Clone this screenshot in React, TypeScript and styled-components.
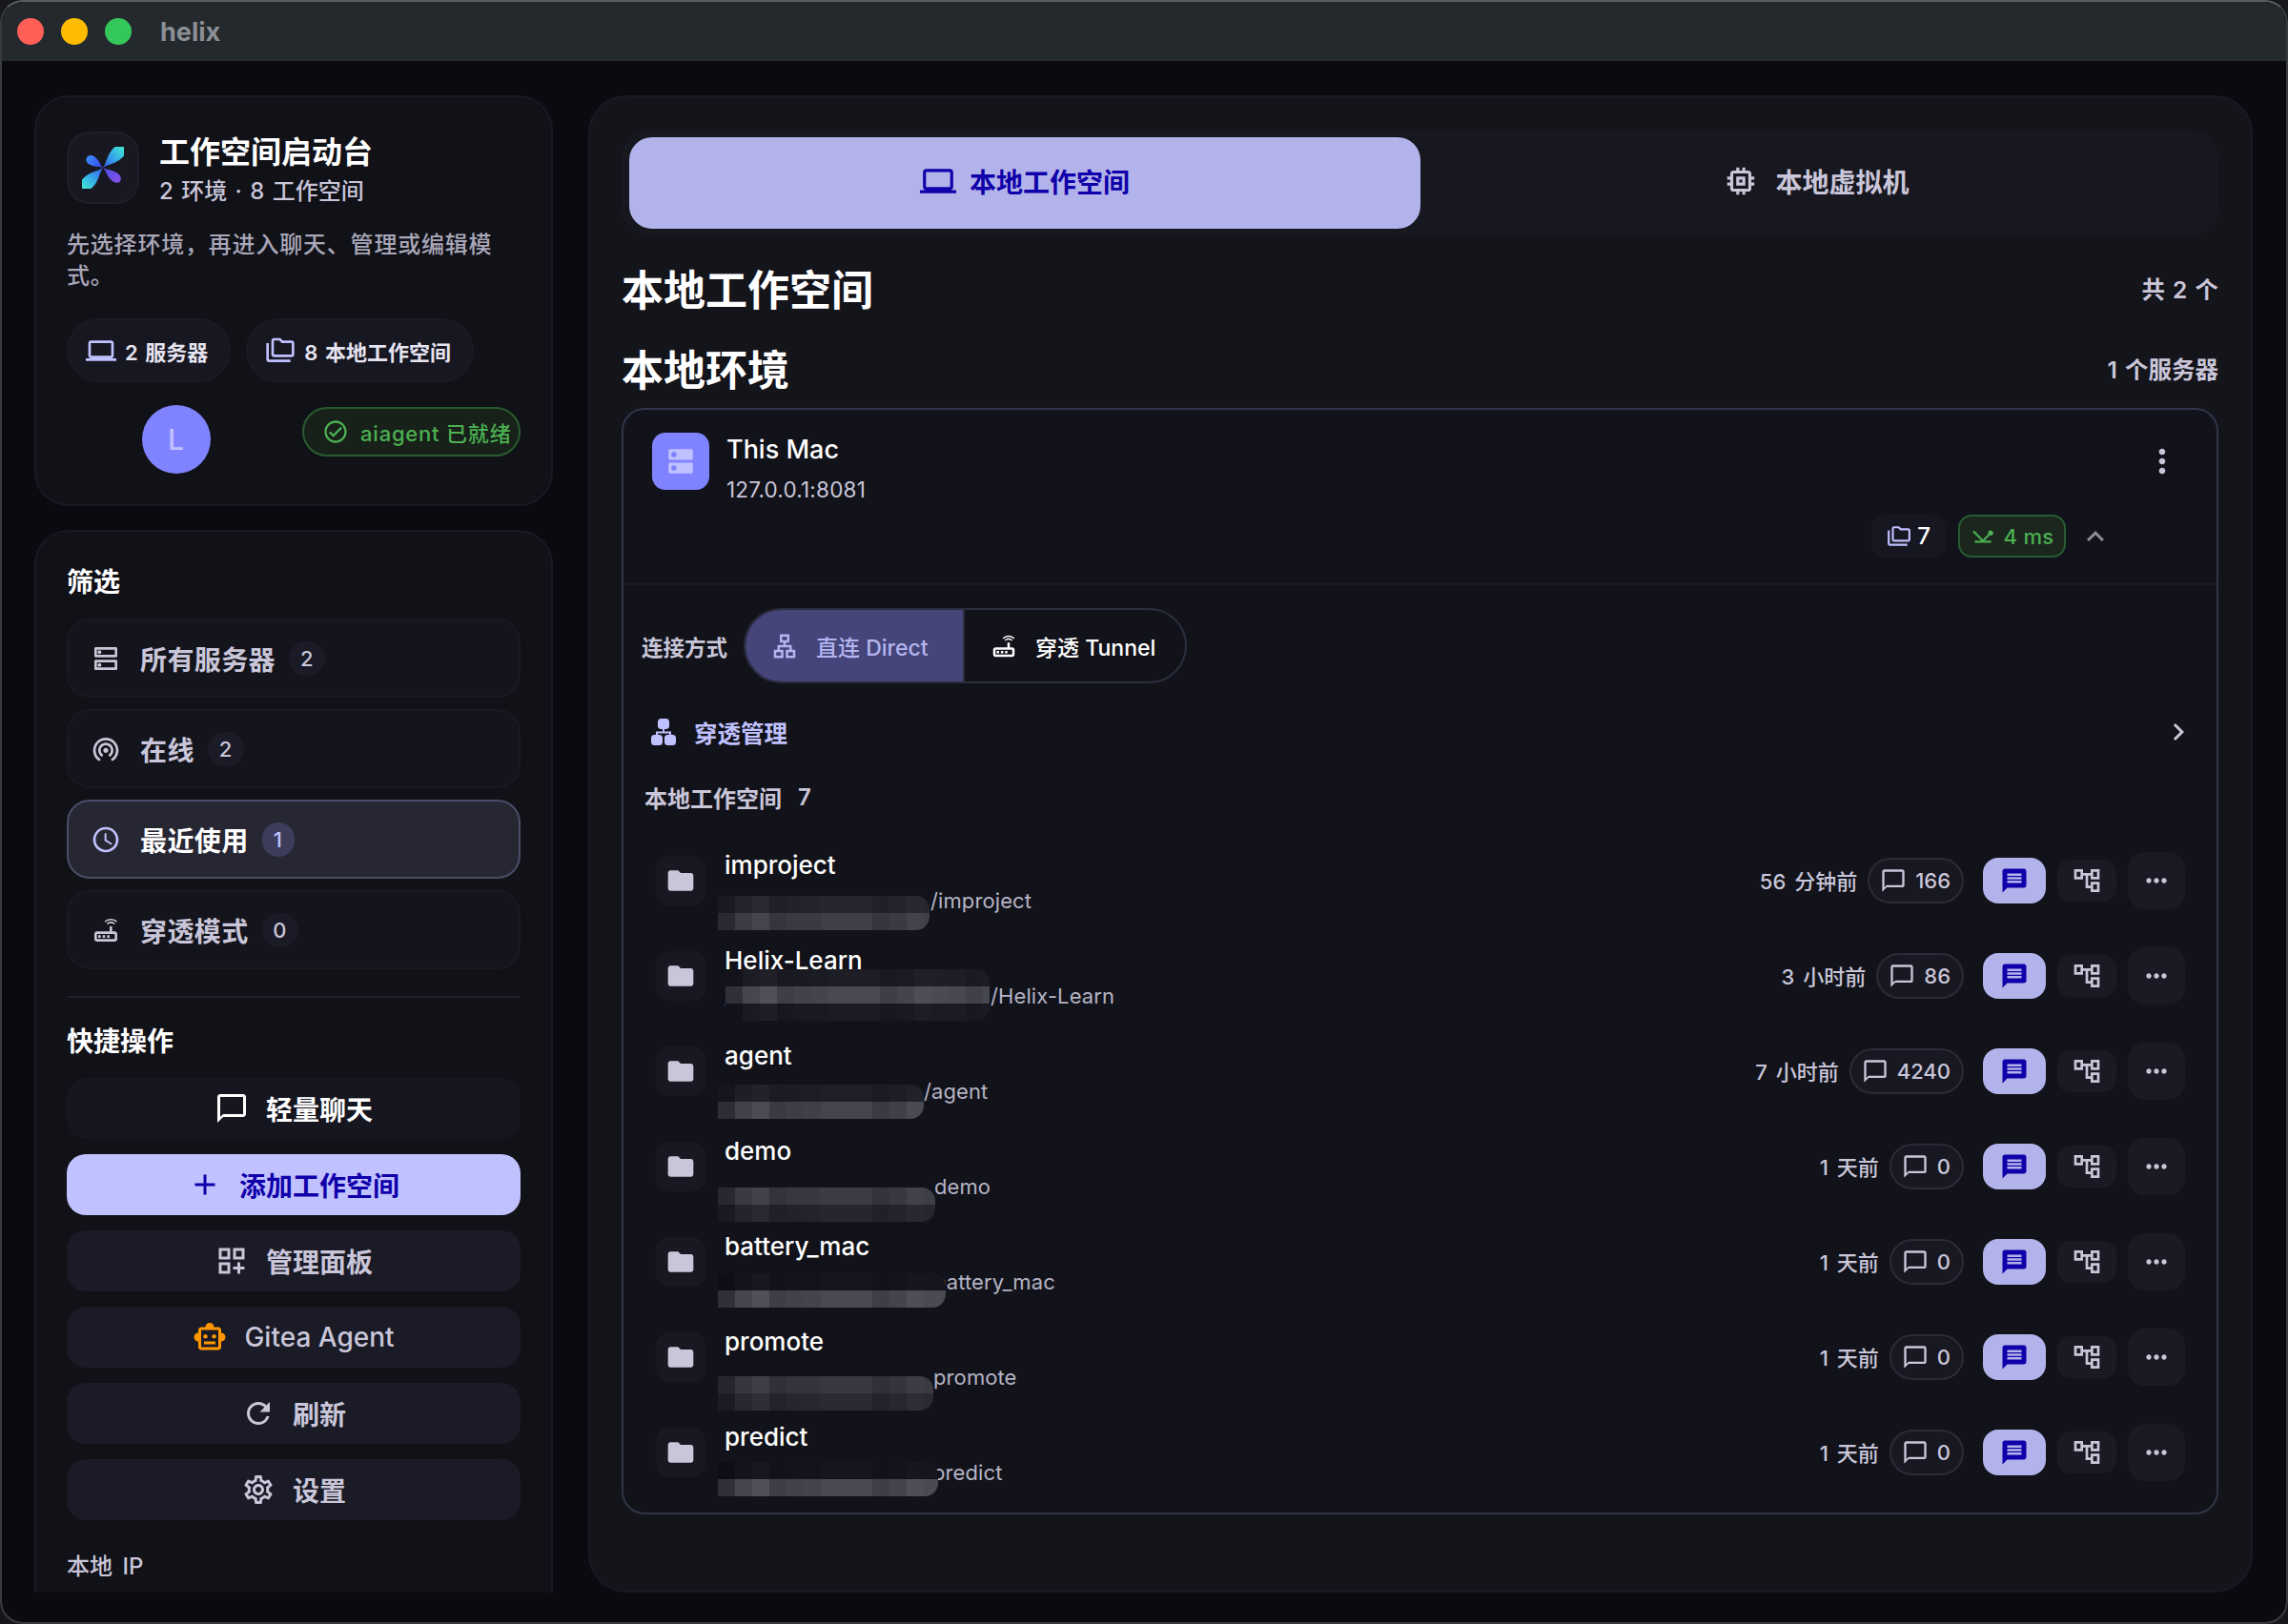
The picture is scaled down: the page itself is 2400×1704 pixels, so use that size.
import React from 'react'
import styled, { createGlobalStyle } from 'styled-components'
import {
  MdAdd,
  MdChatBubbleOutline,
  MdChevronRight,
  MdDns,
  MdKeyboardArrowUp,
  MdLaptop,
  MdMessage,
  MdMoreHoriz,
  MdMoreVert,
  MdFolder,
  MdNetworkPing,
  MdOutlineAccountTree,
  MdOutlineCheckCircle,
  MdOutlineDashboardCustomize,
  MdOutlineDns,
  MdOutlineFolderCopy,
  MdOutlineLan,
  MdOutlineMemory,
  MdOutlineRouter,
  MdOutlineSchedule,
  MdOutlineSettings,
  MdOutlineSmartToy,
  MdOutlineWifiTethering,
  MdRefresh,
} from 'react-icons/md'

const C = {
  primary: '#c0c1ff',
  primaryDim: '#b2b3ea',
  onPrimary: '#1000a9',
  text: '#c9c6d9',
  green: '#4caf50',
}

const GlobalStyle = createGlobalStyle`
  html, body { margin: 0; padding: 0; background: #16171a; }
  body {
    font-family: Inter, "Noto Sans CJK SC", sans-serif;
    color: #fff;
    -webkit-font-smoothing: antialiased;
  }
  * { box-sizing: border-box; }
`

const Glyph = styled.span<{ $size: number; $color?: string }>`
  display: inline-flex;
  flex: none;
  align-items: center;
  justify-content: center;
  width: ${(p) => p.$size}px;
  height: ${(p) => p.$size}px;
  font-size: ${(p) => p.$size}px;
  color: ${(p) => p.$color || 'inherit'};
`

const Window = styled.div`
  width: 2400px;
  height: 1704px;
  display: flex;
  flex-direction: column;
  overflow: hidden;
  border-radius: 24px;
  border: 2px solid #3a3a3f;
  border-top-color: #5c5d60;
  background: #0a0a10;
`

const TitleBar = styled.div`
  height: 62px;
  flex: none;
  display: flex;
  align-items: center;
  padding-left: 16px;
  background: #24292d;
`

const Light = styled.span<{ $color: string }>`
  width: 28px;
  height: 28px;
  border-radius: 50%;
  margin-right: 18px;
  background: ${(p) => p.$color};
`

const AppName = styled.span`
  margin-left: 12px;
  font-size: 27px;
  font-weight: 700;
  color: #8c9096;
`

const Content = styled.div`
  flex: 1;
  min-height: 0;
  display: flex;
  gap: 37px;
  padding: 36px 35px 31px 34px;
`

const Sidebar = styled.div`
  width: 544px;
  flex: none;
  display: flex;
  flex-direction: column;
  gap: 25px;
`

const HeroCard = styled.div`
  flex: none;
  padding: 36px 32px 32px;
  background: #111118;
  border: 2px solid #191923;
  border-radius: 36px;
`

const HeroTop = styled.div`
  display: flex;
  gap: 21px;
`

const LogoBox = styled.div`
  width: 76px;
  height: 76px;
  flex: none;
  display: flex;
  align-items: center;
  justify-content: center;
  background: #181822;
  border: 2px solid #1e1e2a;
  border-radius: 24px;
`

const HeroTitle = styled.div`
  font-size: 32px;
  line-height: 44px;
  font-weight: 700;
  color: #fff;
`

const HeroSub = styled.div`
  margin-top: 3px;
  font-size: 24px;
  line-height: 32px;
  font-weight: 500;
  word-spacing: 2px;
  color: ${C.text};
`

const HeroDesc = styled.p`
  margin: 24px 0 0;
  font-size: 24px;
  line-height: 32.5px;
  font-weight: 500;
  letter-spacing: 0.8px;
  color: #a9a7b8;
`

const ChipRow = styled.div`
  display: flex;
  gap: 16px;
  margin-top: 28px;
`

const StatChip = styled.div`
  height: 67px;
  display: flex;
  align-items: center;
  gap: 9px;
  padding: 0 22px 0 18px;
  border-radius: 34px;
  background: #171722;
  border: 2px solid #1a1a25;
  font-size: 22px;
  font-weight: 600;
  word-spacing: 2px;
  color: #e6e4f0;
`

const HeroFooter = styled.div`
  display: flex;
  align-items: flex-start;
  gap: 18px;
  margin-top: 24px;
`

const AvatarSlot = styled.div`
  flex: 1;
  display: flex;
  justify-content: center;
`

const Avatar = styled.div`
  width: 72px;
  height: 72px;
  display: flex;
  align-items: center;
  justify-content: center;
  border-radius: 50%;
  background: #8083ff;
  color: ${C.primary};
  font-size: 30px;
  font-weight: 500;
`

const ReadyBadge = styled.div`
  height: 52px;
  width: 229px;
  margin-top: 2px;
  display: flex;
  align-items: center;
  gap: 12px;
  padding-left: 19px;
  white-space: nowrap;
  border-radius: 26px;
  background: #17211a;
  border: 2px solid #2a5b30;
  color: ${C.green};
  font-size: 22px;
  font-weight: 500;
  letter-spacing: 0.8px;
`

const FilterCard = styled.div`
  flex: 1;
  min-height: 0;
  overflow: hidden;
  padding: 35px 32px 0;
  background: #111118;
  border: 2px solid #191923;
  border-bottom: 0;
  border-radius: 36px 36px 0 0;
`

const SideHeading = styled.div`
  font-size: 28px;
  line-height: 36px;
  font-weight: 700;
  color: #fff;
`

const FilterList = styled.div`
  display: flex;
  flex-direction: column;
  gap: 12px;
  margin-top: 20px;
`

const FilterRow = styled.div<{ $active?: boolean }>`
  height: 83px;
  display: flex;
  align-items: center;
  gap: 20px;
  padding-left: 23px;
  border-radius: 24px;
  border: 2px solid ${(p) => (p.$active ? '#4d4c68' : '#191922')};
  background: ${(p) => (p.$active ? '#272733' : '#14141c')};
  color: ${(p) => (p.$active ? '#fff' : C.text)};
  font-size: 28px;
  letter-spacing: 0.4px;
  font-weight: ${(p) => (p.$active ? 700 : 600)};
`

const FilterCount = styled.span<{ $active?: boolean }>`
  min-width: ${(p) => (p.$active ? 34 : 38)}px;
  height: 36px;
  margin-left: -6px;
  display: inline-flex;
  align-items: center;
  justify-content: center;
  border-radius: 18px;
  background: ${(p) => (p.$active ? '#3d3d5b' : '#1b1b27')};
  color: ${(p) => (p.$active ? C.primary : C.text)};
  font-size: 22px;
  font-weight: 500;
`

const Divider = styled.div`
  height: 2px;
  margin-top: 28px;
  background: #1f1f2c;
`

const QuickHeading = styled(SideHeading)`
  margin-top: 28px;
`

const QuickList = styled.div`
  display: flex;
  flex-direction: column;
  gap: 16px;
  margin-top: 20px;
`

const QuickButton = styled.div<{ $variant?: 'primary' | 'soft' | 'plain' }>`
  height: 64px;
  display: flex;
  align-items: center;
  justify-content: center;
  gap: 18px;
  border-radius: 20px;
  font-size: 28px;
  font-weight: ${(p) => (p.$variant === 'plain' ? 500 : 600)};
  background: ${(p) => (p.$variant === 'primary' ? C.primary : p.$variant === 'soft' ? '#161620' : '#1a1b26')};
  color: ${(p) => (p.$variant === 'primary' ? C.onPrimary : p.$variant === 'soft' ? '#fff' : C.text)};
`

const LocalIp = styled.div`
  margin-top: 33px;
  font-size: 24px;
  line-height: 32px;
  font-weight: 500;
  word-spacing: 4px;
  color: ${C.text};
`

const MainPanel = styled.div`
  flex: 1;
  min-width: 0;
  padding: 34px 34px 0 33px;
  background: #14141b;
  border: 2px solid #191923;
  border-radius: 40px;
`

const TabBar = styled.div`
  height: 111px;
  display: flex;
  padding: 8px 7px 7px 8px;
  border-radius: 28px;
  background: #171720;
`

const Tab = styled.div<{ $active?: boolean }>`
  flex: 1;
  display: flex;
  align-items: center;
  justify-content: center;
  gap: ${(p) => (p.$active ? 14 : 17)}px;
  padding-bottom: 4px;
  border-radius: 24px;
  font-size: 28px;
  font-weight: 600;
  background: ${(p) => (p.$active ? C.primaryDim : 'transparent')};
  color: ${(p) => (p.$active ? C.onPrimary : C.text)};
`

const HeadingRow = styled.div<{ $gap: number }>`
  height: 56px;
  margin-top: ${(p) => p.$gap}px;
  display: flex;
  align-items: center;
  justify-content: space-between;
`

const PageHeading = styled.h2`
  margin: 0;
  font-size: 44px;
  font-weight: 700;
  color: #fff;
`

const HeadingMeta = styled.span`
  font-size: 24.5px;
  font-weight: 600;
  word-spacing: 2px;
  color: ${C.text};
`

const ServerCard = styled.div`
  margin-top: 14px;
  border: 2px solid #34344a;
  border-radius: 24px;
  background: #12131a;
`

const ServerHead = styled.div`
  height: 184px;
  padding: 24px 37px 0 30px;
  border-bottom: 2px solid #1c1c28;
`

const ServerTop = styled.div`
  display: flex;
  align-items: flex-start;
  gap: 18px;
`

const ServerIcon = styled.div`
  width: 60px;
  height: 60px;
  flex: none;
  display: flex;
  align-items: center;
  justify-content: center;
  border-radius: 14px;
  background: #8083ff;
  color: ${C.primary};
`

const ServerInfo = styled.div`
  flex: 1;
`

const ServerName = styled.div`
  font-size: 27px;
  line-height: 36px;
  font-weight: 500;
  color: #fff;
`

const ServerAddr = styled.div`
  margin-top: 10px;
  font-size: 22.5px;
  line-height: 28px;
  letter-spacing: 0.2px;
  color: ${C.text};
`

const KebabSlot = styled.div`
  margin-top: 10px;
  display: flex;
  color: ${C.text};
`

const ServerStats = styled.div`
  display: flex;
  justify-content: flex-end;
  align-items: center;
  gap: 13px;
  margin-top: 12px;
  padding-right: 72px;
`

const CountChip = styled.div`
  width: 78px;
  height: 45px;
  display: flex;
  align-items: center;
  justify-content: center;
  gap: 6px;
  border-radius: 14px;
  background: #171722;
  font-size: 24px;
  font-weight: 500;
  color: #fff;
`

const LatencyChip = styled.div`
  width: 113px;
  height: 45px;
  display: flex;
  align-items: center;
  justify-content: center;
  gap: 9px;
  border-radius: 14px;
  background: #1b261f;
  border: 2px solid #2a5b30;
  color: ${C.green};
  font-size: 22px;
  font-weight: 500;
  letter-spacing: 0.3px;
  white-space: nowrap;
`

const ConnectRow = styled.div`
  display: flex;
  align-items: center;
  gap: 17px;
  margin-top: 24px;
  padding-left: 19px;
`

const ConnectLabel = styled.span`
  font-size: 22.5px;
  font-weight: 600;
  color: ${C.text};
`

const Segmented = styled.div`
  height: 79px;
  display: flex;
  overflow: hidden;
  border-radius: 40px;
  border: 2px solid #2d2d40;
`

const Segment = styled.div<{ $active?: boolean }>`
  width: ${(p) => (p.$active ? 230 : 231)}px;
  display: flex;
  align-items: center;
  gap: 18px;
  padding-left: 26px;
  white-space: nowrap;
  font-size: 23px;
  font-weight: 500;
  background: ${(p) => (p.$active ? '#45457a' : 'transparent')};
  color: ${(p) => (p.$active ? '#b4b5f0' : '#fff')};
  border-right: ${(p) => (p.$active ? '2px solid #2d2d40' : '0')};
`

const TunnelRow = styled.div`
  height: 54px;
  margin-top: 24px;
  padding: 0 22px 0 29px;
  display: flex;
  align-items: center;
  gap: 19px;
  color: ${C.primary};
  font-size: 24.5px;
  font-weight: 700;
`

const TunnelLabel = styled.span`
  flex: 1;
`

const ListLabel = styled.div`
  display: flex;
  gap: 17px;
  height: 32px;
  align-items: center;
  margin-top: 25px;
  padding-left: 22px;
  font-size: 24px;
  font-weight: 600;
  color: ${C.text};
`

const WorkspaceList = styled.div`
  margin-top: 22px;
  padding-bottom: 13px;
`

const WorkspaceRow = styled.div`
  height: 100px;
  display: flex;
  align-items: center;
  padding: 0 33px 0 34px;
`

const FolderBox = styled.div`
  width: 52px;
  height: 52px;
  flex: none;
  display: flex;
  align-items: center;
  justify-content: center;
  border-radius: 14px;
  background: #181822;
  color: ${C.text};
`

const RowInfo = styled.div`
  flex: 1;
  min-width: 0;
  margin-left: 20px;
`

const RowName = styled.div`
  font-size: 26px;
  line-height: 36px;
  font-weight: 500;
  color: #fff;
`

const RowPath = styled.div`
  margin-top: 5px;
  display: flex;
  height: 28px;
  align-items: center;
  font-size: 22px;
  letter-spacing: 0.1px;
  color: #b5b3c5;
  white-space: nowrap;
`

const PathPrefix = styled.div<{ $width: number }>`
  position: relative;
  flex: none;
  width: ${(p) => p.$width}px;
`

const MosaicBlock = styled.div<{ $top: number; $left: number }>`
  position: absolute;
  left: ${(p) => p.$left}px;
  top: ${(p) => p.$top}px;
  overflow: hidden;
  z-index: 1;
  border-radius: 0 14px 14px 0;
`

const MosaicLine = styled.div`
  display: flex;
  height: 18px;
`

const MosaicCell = styled.span`
  width: 18px;
  flex: none;
  height: 18px;
`

const PathTail = styled.span`
  position: relative;
`

const RowTime = styled.span`
  margin-right: 11px;
  padding-bottom: 3px;
  font-size: 22px;
  font-weight: 500;
  word-spacing: 3px;
  color: ${C.text};
`

const MessagePill = styled.div`
  height: 48px;
  display: flex;
  align-items: center;
  gap: 9px;
  padding: 0 12px 0 11px;
  border-radius: 24px;
  border: 2px solid #2b2b39;
  background: #181822;
  font-size: 22px;
  font-weight: 500;
  color: ${C.text};
`

const ChatButton = styled.div`
  width: 66px;
  height: 48px;
  margin-left: 20px;
  display: flex;
  align-items: center;
  justify-content: center;
  border-radius: 16px;
  background: ${C.primaryDim};
  color: ${C.onPrimary};
`

const TreeButton = styled.div`
  width: 62px;
  height: 44px;
  margin-left: 12px;
  display: flex;
  align-items: center;
  justify-content: center;
  border-radius: 14px;
  background: #1a1a24;
  color: ${C.text};
`

const MoreButton = styled.div`
  width: 60px;
  height: 60px;
  margin-left: 12px;
  display: flex;
  align-items: center;
  justify-content: center;
  border-radius: 18px;
  background: #1a1a24;
  color: ${C.text};
`

function HelixLogo() {
  const petal = 'M0 0C-1 -6 -8 -11 -8 -20A8 8 0 0 1 8 -20C8 -11 1 -6 0 0Z'
  return (
    <svg width="44" height="44" viewBox="0 0 44 44">
      <defs>
        <linearGradient id="tealPetal" gradientUnits="userSpaceOnUse" x1="0" y1="0" x2="0" y2="-26">
          <stop offset="0" stopColor="#3a5cf0" />
          <stop offset="0.55" stopColor="#35a8e8" />
          <stop offset="1" stopColor="#3fe0d8" />
        </linearGradient>
        <linearGradient id="bluePetal" gradientUnits="userSpaceOnUse" x1="0" y1="0" x2="0" y2="-26">
          <stop offset="0" stopColor="#3a3ff0" />
          <stop offset="1" stopColor="#3a8af5" />
        </linearGradient>
        <linearGradient id="purplePetal" gradientUnits="userSpaceOnUse" x1="0" y1="0" x2="0" y2="-26">
          <stop offset="0" stopColor="#4a50e8" />
          <stop offset="1" stopColor="#8150e6" />
        </linearGradient>
      </defs>
      <path d={petal} fill="url(#bluePetal)" transform="translate(22 22) rotate(-57) scale(0.62 0.72)" />
      <path d={petal} fill="url(#purplePetal)" transform="translate(22 22) rotate(128) scale(0.62 0.82)" />
      <path d={petal} fill="url(#tealPetal)" transform="translate(22 22) rotate(45) scale(0.85 1.1)" />
      <path d={petal} fill="url(#tealPetal)" transform="translate(22 22) rotate(225) scale(0.85 1.1)" />
    </svg>
  )
}

function TunnelHubIcon() {
  return (
    <svg width="26" height="28" viewBox="0 0 26 28" fill="currentColor">
      <rect x="7" y="0" width="12" height="11" rx="3.5" />
      <rect x="0" y="17" width="12" height="11" rx="3.5" />
      <rect x="14" y="17" width="12" height="11" rx="3.5" />
      <path d="M12 10h2v3.5h7v4h-2v-2H7v2H5v-4h7z" />
    </svg>
  )
}

const filters = [
  { label: '所有服务器', count: 2, icon: <MdOutlineDns /> },
  { label: '在线', count: 2, icon: <MdOutlineWifiTethering /> },
  { label: '最近使用', count: 1, icon: <MdOutlineSchedule />, active: true },
  { label: '穿透模式', count: 0, icon: <MdOutlineRouter /> },
]

// brightness of each mosaic square, same across rows like the original blur
const mosaicPattern = [-22, 0, 10, -8, -4, -2, 3, 3, 3, -8, -2, 8, 4, 2, -6, 0]

type Workspace = {
  name: string
  head?: string
  tail: string
  prefix: number
  top: number
  left?: number
  width: number
  lines: number[]
  time: string
  messages: number
}

const workspaces: Workspace[] = [
  { name: 'improject', tail: '/improject', prefix: 216, top: -5, width: 222, lines: [36, 60], time: '56 分钟前', messages: 166 },
  { name: 'Helix-Learn', head: '/', tail: '/Helix-Learn', prefix: 279, top: -15, left: 1, width: 277, lines: [28, 70, 26], time: '3 小时前', messages: 86 },
  { name: 'agent', tail: '/agent', prefix: 209, top: -7, width: 216, lines: [30, 66], time: '7 小时前', messages: 4240 },
  { name: 'demo', tail: 'demo', prefix: 220, top: 1, width: 228, lines: [58, 36], time: '1 天前', messages: 0 },
  { name: 'battery_mac', tail: 'battery_mac', prefix: 219, top: -9, width: 239, lines: [20, 70], time: '1 天前', messages: 0 },
  { name: 'promote', tail: 'promote', prefix: 219, top: -1, width: 226, lines: [54, 40], time: '1 天前', messages: 0 },
  { name: 'predict', tail: 'predict', prefix: 218, top: -11, width: 231, lines: [20, 70], time: '1 天前', messages: 0 },
]

function Mosaic({ top, left = -7, width, lines }: { top: number; left?: number; width: number; lines: number[] }) {
  const cols = Math.ceil(width / 18)
  return (
    <MosaicBlock $top={top} $left={left} style={{ width }}>
      {lines.map((base, l) => (
        <MosaicLine key={l}>
          {Array.from({ length: cols }).map((_, c) => {
            const v = base + Math.round((mosaicPattern[c] * base) / 70)
            return <MosaicCell key={c} style={{ background: `rgb(${v},${v},${v + 8})` }} />
          })}
        </MosaicLine>
      ))}
    </MosaicBlock>
  )
}

export default function App() {
  return (
    <>
      <GlobalStyle />
      <Window>
        <TitleBar>
          <Light $color="#ff5f57" />
          <Light $color="#febc00" />
          <Light $color="#34c759" />
          <AppName>helix</AppName>
        </TitleBar>
        <Content>
          <Sidebar>
            <HeroCard>
              <HeroTop>
                <LogoBox>
                  <HelixLogo />
                </LogoBox>
                <div>
                  <HeroTitle>工作空间启动台</HeroTitle>
                  <HeroSub>2 环境 · 8 工作空间</HeroSub>
                </div>
              </HeroTop>
              <HeroDesc>先选择环境，再进入聊天、管理或编辑模式。</HeroDesc>
              <ChipRow>
                <StatChip>
                  <Glyph $size={32} $color={C.primary}>
                    <MdLaptop />
                  </Glyph>
                  2 服务器
                </StatChip>
                <StatChip>
                  <Glyph $size={32} $color={C.primary}>
                    <MdOutlineFolderCopy />
                  </Glyph>
                  8 本地工作空间
                </StatChip>
              </ChipRow>
              <HeroFooter>
                <AvatarSlot>
                  <Avatar>L</Avatar>
                </AvatarSlot>
                <ReadyBadge>
                  <Glyph $size={28}>
                    <MdOutlineCheckCircle />
                  </Glyph>
                  aiagent 已就绪
                </ReadyBadge>
              </HeroFooter>
            </HeroCard>

            <FilterCard>
              <SideHeading>筛选</SideHeading>
              <FilterList>
                {filters.map((f) => (
                  <FilterRow key={f.label} $active={f.active}>
                    <Glyph $size={32} $color={f.active ? C.primary : C.text}>
                      {f.icon}
                    </Glyph>
                    {f.label}
                    <FilterCount $active={f.active}>{f.count}</FilterCount>
                  </FilterRow>
                ))}
              </FilterList>
              <Divider />
              <QuickHeading>快捷操作</QuickHeading>
              <QuickList>
                <QuickButton $variant="soft">
                  <Glyph $size={36}>
                    <MdChatBubbleOutline />
                  </Glyph>
                  轻量聊天
                </QuickButton>
                <QuickButton $variant="primary">
                  <Glyph $size={36}>
                    <MdAdd />
                  </Glyph>
                  添加工作空间
                </QuickButton>
                <QuickButton>
                  <Glyph $size={36}>
                    <MdOutlineDashboardCustomize />
                  </Glyph>
                  管理面板
                </QuickButton>
                <QuickButton $variant="plain">
                  <Glyph $size={36} $color="#ff9800">
                    <MdOutlineSmartToy />
                  </Glyph>
                  Gitea Agent
                </QuickButton>
                <QuickButton>
                  <Glyph $size={36}>
                    <MdRefresh />
                  </Glyph>
                  刷新
                </QuickButton>
                <QuickButton>
                  <Glyph $size={36}>
                    <MdOutlineSettings />
                  </Glyph>
                  设置
                </QuickButton>
              </QuickList>
              <LocalIp>本地 IP</LocalIp>
            </FilterCard>
          </Sidebar>

          <MainPanel>
            <TabBar>
              <Tab $active>
                <Glyph $size={38}>
                  <MdLaptop />
                </Glyph>
                本地工作空间
              </Tab>
              <Tab>
                <Glyph $size={38}>
                  <MdOutlineMemory />
                </Glyph>
                本地虚拟机
              </Tab>
            </TabBar>

            <HeadingRow $gap={27}>
              <PageHeading>本地工作空间</PageHeading>
              <HeadingMeta>共 2 个</HeadingMeta>
            </HeadingRow>
            <HeadingRow $gap={28}>
              <PageHeading>本地环境</PageHeading>
              <HeadingMeta>1 个服务器</HeadingMeta>
            </HeadingRow>

            <ServerCard>
              <ServerHead>
                <ServerTop>
                  <ServerIcon>
                    <Glyph $size={34}>
                      <MdDns />
                    </Glyph>
                  </ServerIcon>
                  <ServerInfo>
                    <ServerName>This Mac</ServerName>
                    <ServerAddr>127.0.0.1:8081</ServerAddr>
                  </ServerInfo>
                  <KebabSlot>
                    <Glyph $size={40}>
                      <MdMoreVert />
                    </Glyph>
                  </KebabSlot>
                </ServerTop>
                <ServerStats>
                  <CountChip>
                    <Glyph $size={26} $color={C.primary}>
                      <MdOutlineFolderCopy />
                    </Glyph>
                    7
                  </CountChip>
                  <LatencyChip>
                    <Glyph $size={26}>
                      <MdNetworkPing />
                    </Glyph>
                    4 ms
                  </LatencyChip>
                  <Glyph $size={36} $color="#8e8d9c">
                    <MdKeyboardArrowUp />
                  </Glyph>
                </ServerStats>
              </ServerHead>

              <ConnectRow>
                <ConnectLabel>连接方式</ConnectLabel>
                <Segmented>
                  <Segment $active>
                    <Glyph $size={30}>
                      <MdOutlineLan />
                    </Glyph>
                    直连 Direct
                  </Segment>
                  <Segment>
                    <Glyph $size={30}>
                      <MdOutlineRouter />
                    </Glyph>
                    穿透 Tunnel
                  </Segment>
                </Segmented>
              </ConnectRow>

              <TunnelRow>
                <TunnelHubIcon />
                <TunnelLabel>穿透管理</TunnelLabel>
                <Glyph $size={36} $color={C.text}>
                  <MdChevronRight />
                </Glyph>
              </TunnelRow>

              <ListLabel>
                本地工作空间
                <span>7</span>
              </ListLabel>

              <WorkspaceList>
                {workspaces.map((w) => (
                  <WorkspaceRow key={w.name}>
                    <FolderBox>
                      <Glyph $size={32}>
                        <MdFolder />
                      </Glyph>
                    </FolderBox>
                    <RowInfo>
                      <RowName>{w.name}</RowName>
                      <RowPath>
                        <PathPrefix $width={w.prefix}>
                          {w.head}
                          <Mosaic top={w.top} left={w.left} width={w.width} lines={w.lines} />
                        </PathPrefix>
                        <PathTail>{w.tail}</PathTail>
                      </RowPath>
                    </RowInfo>
                    <RowTime>{w.time}</RowTime>
                    <MessagePill>
                      <Glyph $size={28}>
                        <MdChatBubbleOutline />
                      </Glyph>
                      {w.messages}
                    </MessagePill>
                    <ChatButton>
                      <Glyph $size={30}>
                        <MdMessage />
                      </Glyph>
                    </ChatButton>
                    <TreeButton>
                      <Glyph $size={32}>
                        <MdOutlineAccountTree />
                      </Glyph>
                    </TreeButton>
                    <MoreButton>
                      <Glyph $size={32}>
                        <MdMoreHoriz />
                      </Glyph>
                    </MoreButton>
                  </WorkspaceRow>
                ))}
              </WorkspaceList>
            </ServerCard>
          </MainPanel>
        </Content>
      </Window>
    </>
  )
}
